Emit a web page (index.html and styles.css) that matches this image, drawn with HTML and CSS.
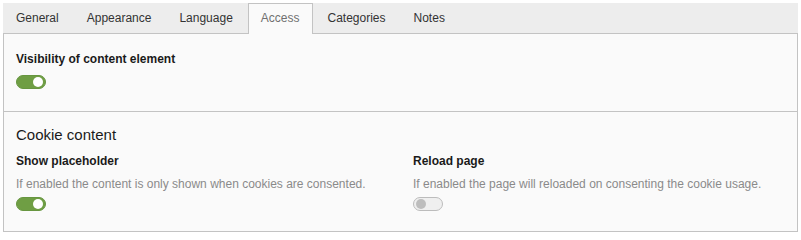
FILE: index.html
```html
<!DOCTYPE html>
<html lang="en">
<head>
<meta charset="utf-8">
<title>Content element – Access</title>
<link rel="stylesheet" href="styles.css">
</head>
<body>
<div class="editor">
  <ul class="tabs">
    <li class="tab">General</li>
    <li class="tab">Appearance</li>
    <li class="tab">Language</li>
    <li class="tab active">Access</li>
    <li class="tab">Categories</li>
    <li class="tab">Notes</li>
  </ul>
  <div class="panel">
    <section class="section first">
      <div class="label">Visibility of content element</div>
      <span class="toggle on"><span class="knob"></span></span>
    </section>
    <section class="section second">
      <h3 class="section-title">Cookie content</h3>
      <div class="fields">
        <div class="field">
          <div class="label">Show placeholder</div>
          <div class="desc">If enabled the content is only shown when cookies are consented.</div>
          <span class="toggle on"><span class="knob"></span></span>
        </div>
        <div class="field">
          <div class="label">Reload page</div>
          <div class="desc">If enabled the page will reloaded on consenting the cookie usage.</div>
          <span class="toggle off"><span class="knob"></span></span>
        </div>
      </div>
    </section>
  </div>
</div>
</body>
</html>
```

FILE: styles.css
```css
html, body {
  margin: 0;
  padding: 0;
  background: #ffffff;
}
body {
  font-family: "Liberation Sans", Arial, sans-serif;
  font-size: 12px;
  line-height: 18px;
  color: #1a1a1a;
}
.editor {
  margin: 3px 3px 0 3px;
}
.tabs {
  list-style: none;
  margin: 0;
  padding: 0;
  display: flex;
  background: #ededed;
  border-bottom: 1px solid #c3c3c3;
  height: 30px;
}
.tab {
  border: 1px solid transparent;
  border-bottom: 0;
  padding: 5px 12px 6px;
  font-size: 12px;
  color: #333333;
  white-space: nowrap;
}
.tab + .tab {
  margin-left: 2px;
}
.tab.active {
  background: #fafafa;
  border-color: #c3c3c3;
  color: #707070;
  padding-bottom: 7px;
  margin-bottom: -1px;
}
.panel {
  background: #fafafa;
  border-left: 1px solid #c3c3c3;
  border-right: 1px solid #c3c3c3;
}
.section {
  border-bottom: 1px solid #c3c3c3;
  padding: 0 12px;
}
.section.first {
  padding-top: 16px;
  padding-bottom: 22px;
}
.section.second {
  padding-top: 13px;
  padding-bottom: 20px;
}
.section-title {
  margin: 0 0 7px;
  font-size: 15px;
  line-height: 20px;
  font-weight: normal;
  color: #1a1a1a;
}
.label {
  font-weight: bold;
  color: #1a1a1a;
}
.first .label {
  margin-bottom: 7px;
}
.fields {
  display: grid;
  grid-template-columns: 397px 1fr;
}
.desc {
  margin-top: 5px;
  margin-bottom: 4px;
  color: #8a8a8a;
}
.toggle {
  display: flex;
  align-items: center;
  box-sizing: border-box;
  width: 30px;
  height: 14px;
  border-radius: 7px;
  padding: 0 2px;
  border: 1px solid;
}
.toggle.on {
  background: #6f9e44;
  border-color: #679640;
  justify-content: flex-end;
}
.toggle.off {
  background: #efefef;
  border-color: #bcbcbc;
  justify-content: flex-start;
}
.knob {
  width: 10px;
  height: 10px;
  border-radius: 50%;
}
.on .knob {
  background: #ffffff;
}
.off .knob {
  background: #bdbdbd;
}
```
